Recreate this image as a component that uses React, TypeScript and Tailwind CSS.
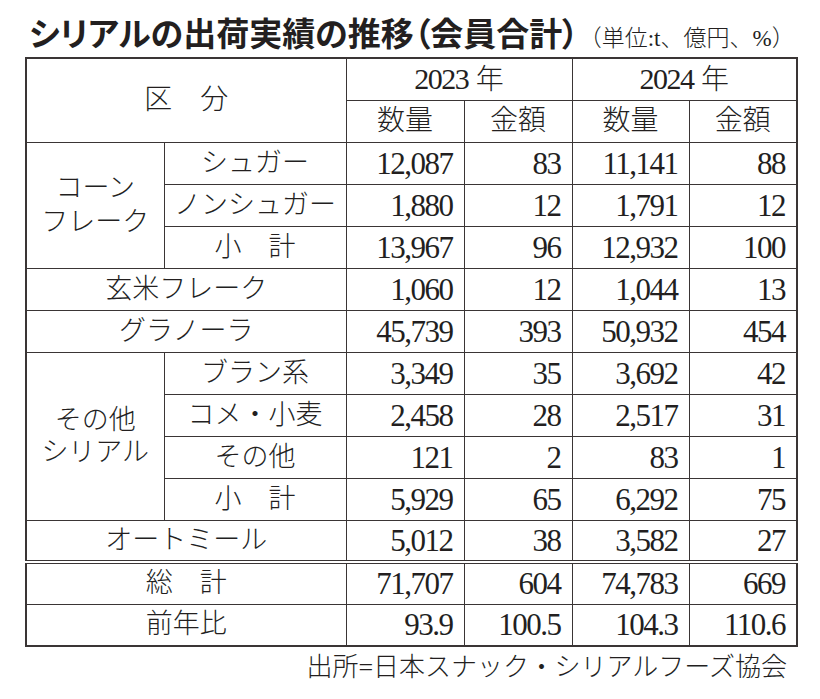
import React from "react";

// シリアルの出荷実績（会員合計）
const cornRows = [
  ["シュガー", "12,087", "83", "11,141", "88"],
  ["ノンシュガー", "1,880", "12", "1,791", "12"],
  ["小　計", "13,967", "96", "12,932", "100"],
];

const otherRows = [
  ["ブラン系", "3,349", "35", "3,692", "42"],
  ["コメ・小麦", "2,458", "28", "2,517", "31"],
  ["その他", "121", "2", "83", "1"],
  ["小　計", "5,929", "65", "6,292", "75"],
];

const cell = "border border-[#3a3535] p-0 align-middle";
const label = "text-center text-[27px] font-light leading-none";
const num = "text-right text-[31px] leading-none tracking-[-1.5px] pr-[11px]";

function Nums({ values, top = "" }: { values: string[]; top?: string }) {
  return (
    <>
      {values.map((v, i) => (
        <td key={i} className={`${cell} ${num} ${top}`}>
          {v}
        </td>
      ))}
    </>
  );
}

function SingleRow({ name, values, top = "" }: { name: string; values: string[]; top?: string }) {
  return (
    <tr className="h-[42px]">
      <td colSpan={2} className={`${cell} ${label} ${top}`}>
        {name}
      </td>
      <Nums values={values} top={top} />
    </tr>
  );
}

export default function App() {
  return (
    <div className="w-[820px] h-[699px] bg-white text-[#231f1f] px-[25px] font-['Liberation_Serif','Noto_Sans_CJK_JP',serif]">
      {/* タイトル */}
      <div className="flex items-baseline pt-[16px] pl-[4px]">
        <h1 className="text-[33px] font-bold leading-none font-['Noto_Sans_CJK_JP',sans-serif] [font-feature-settings:'palt']">
          シリアルの出荷実績の推移（会員合計）
        </h1>
        <span className="text-[23px] leading-none font-light">（単位:t、億円、%）</span>
      </div>

      <table className="mt-[7px] w-[771px] table-fixed border-collapse border-2 border-[#3a3535]">
        <colgroup>
          <col className="w-[138px]" />
          <col className="w-[182px]" />
          <col className="w-[118px]" />
          <col className="w-[108px]" />
          <col className="w-[117px]" />
          <col className="w-[108px]" />
        </colgroup>
        <thead>
          <tr className="h-[42px]">
            <th rowSpan={2} colSpan={2} className={`${cell} text-center text-[28px] font-light leading-none`}>
              区　分
            </th>
            <th colSpan={2} className={`${cell} text-center text-[30px] font-normal leading-none`}>
              <span className="tracking-[-1.5px]">2023</span> <span className="text-[28px] font-light">年</span>
            </th>
            <th colSpan={2} className={`${cell} text-center text-[30px] font-normal leading-none`}>
              <span className="tracking-[-1.5px]">2024</span> <span className="text-[28px] font-light">年</span>
            </th>
          </tr>
          <tr className="h-[42px]">
            {["数量", "金額", "数量", "金額"].map((h, i) => (
              <th key={i} className={`${cell} text-center text-[28px] font-light leading-none`}>
                {h}
              </th>
            ))}
          </tr>
        </thead>
        <tbody>
          {cornRows.map((r, i) => (
            <tr key={r[0] + i} className="h-[42px]">
              {i === 0 && (
                <td rowSpan={3} className={`${cell} text-center text-[27px] font-light leading-[34px]`}>
                  コーン
                  <br />
                  フレーク
                </td>
              )}
              <td className={`${cell} ${label}`}>{r[0]}</td>
              <Nums values={r.slice(1)} />
            </tr>
          ))}
          <SingleRow name="玄米フレーク" values={["1,060", "12", "1,044", "13"]} />
          <SingleRow name="グラノーラ" values={["45,739", "393", "50,932", "454"]} />
          {otherRows.map((r, i) => (
            <tr key={r[0] + i} className="h-[42px]">
              {i === 0 && (
                <td rowSpan={4} className={`${cell} text-center text-[27px] font-light leading-[32px]`}>
                  その他
                  <br />
                  シリアル
                </td>
              )}
              <td className={`${cell} ${label}`}>{r[0]}</td>
              <Nums values={r.slice(1)} />
            </tr>
          ))}
          <SingleRow name="オートミール" values={["5,012", "38", "3,582", "27"]} />
          <SingleRow name="総　計" values={["71,707", "604", "74,783", "669"]} top="border-t-4 border-double" />
          <SingleRow name="前年比" values={["93.9", "100.5", "104.3", "110.6"]} />
        </tbody>
      </table>

      <p className="mt-[8px] w-[771px] pr-[9px] text-right text-[26px] font-light leading-none">
        出所=日本スナック・シリアルフーズ協会
      </p>
    </div>
  );
}
